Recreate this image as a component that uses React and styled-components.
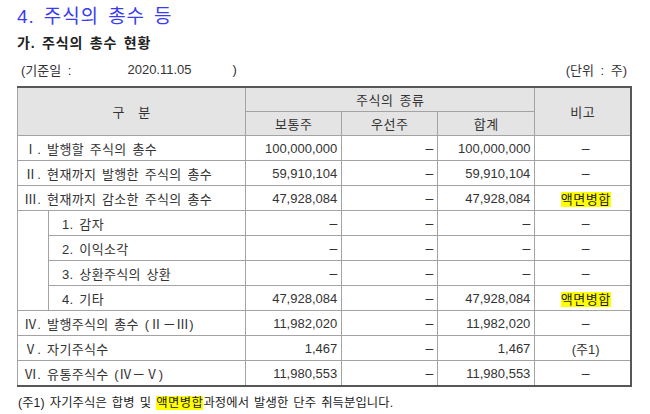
import React from 'react';
import styled, { createGlobalStyle } from 'styled-components';

const Global = createGlobalStyle`
  html, body { margin: 0; padding: 0; background: #ffffff; }
  body { font-family: "Liberation Sans", "Noto Sans CJK KR", sans-serif; color: #333; }
`;

const Page = styled.div`
  width: 650px;
  padding: 4px 18px 0 17px;
  box-sizing: border-box;
`;

const Title = styled.h1`
  margin: 0;
  font-size: 19px;
  line-height: 26px;
  font-weight: normal;
  color: #3b3bf2;
  letter-spacing: 0.9px;
  word-spacing: 3px;
`;

const SubTitle = styled.h2`
  margin: 2px 0 0 0;
  font-size: 14px;
  line-height: 22px;
  font-weight: bold;
  color: #222;
  letter-spacing: 0.8px;
  word-spacing: 2px;
`;

const InfoBar = styled.div`
  display: flex;
  justify-content: space-between;
  align-items: center;
  height: 28px;
  margin-top: 1px;
  padding: 0 5px 0 4px;
  font-size: 13px;
  color: #333;
  word-spacing: 3px;
`;

const DateGroup = styled.div`
  display: flex;
  align-items: center;
`;

const DateValue = styled.span`
  margin-left: ${p => p.$gap}px;
`;

const Table = styled.table`
  border-collapse: collapse;
  table-layout: fixed;
  width: 615px;
  margin-top: 3px;
  border: 2px solid #575757;
  border-left-width: 1px;
  font-size: 13px;
  color: #333;
`;

const Th = styled.th`
  background: #e4e4e4;
  border: 1px solid #a3a3a3;
  font-weight: normal;
  height: 23px;
  padding: 0;
  text-align: center;
  letter-spacing: 0.5px;
  word-spacing: ${p => (p.$wide ? '9px' : '2px')};
`;

const Td = styled.td`
  border: 1px solid #a3a3a3;
  height: 24px;
  padding: ${p => (p.$align === 'right' ? '0 4px 0 0' : p.$sub ? '0 0 0 13px' : '0 0 0 6px')};
  text-align: ${p => p.$align || 'left'};
  white-space: nowrap;
  letter-spacing: ${p => (p.$align === 'left' || !p.$align ? '0.3px' : '0')};
  word-spacing: 2px;
`;

const IndentCell = styled.td`
  border: 1px solid #a3a3a3;
  padding: 0;
`;

const Dash = styled.span`
  font-size: 14px;
`;

const Highlight = styled.span`
  background: #ffff00;
  color: #222;
  letter-spacing: 0.5px;
`;

const Footnote = styled.p`
  margin: 7px 0 0 1px;
  font-size: 12.3px;
  line-height: 18px;
  color: #222;
  letter-spacing: 0.1px;
  word-spacing: 1.5px;
`;

const D = () => <Dash>–</Dash>;

const Note = ({ v }) => {
  if (v === 'hl') return <Highlight>액면병합</Highlight>;
  if (v === '-') return <D />;
  return v;
};

const Num = ({ v }) => (v === '-' ? <D /> : v);

const mainRows = [
  { label: 'Ⅰ. 발행할 주식의 총수', c: '100,000,000', p: '-', t: '100,000,000', n: '-' },
  { label: 'Ⅱ. 현재까지 발행한 주식의 총수', c: '59,910,104', p: '-', t: '59,910,104', n: '-' },
  { label: 'Ⅲ. 현재까지 감소한 주식의 총수', c: '47,928,084', p: '-', t: '47,928,084', n: 'hl' },
];

const subRows = [
  { label: '1. 감자', c: '-', p: '-', t: '-', n: '-' },
  { label: '2. 이익소각', c: '-', p: '-', t: '-', n: '-' },
  { label: '3. 상환주식의 상환', c: '-', p: '-', t: '-', n: '-' },
  { label: '4. 기타', c: '47,928,084', p: '-', t: '47,928,084', n: 'hl' },
];

const tailRows = [
  { label: 'Ⅳ. 발행주식의 총수 (Ⅱ－Ⅲ)', c: '11,982,020', p: '-', t: '11,982,020', n: '-' },
  { label: 'Ⅴ. 자기주식수', c: '1,467', p: '-', t: '1,467', n: '(주1)' },
  { label: 'Ⅵ. 유통주식수 (Ⅳ－Ⅴ)', c: '11,980,553', p: '-', t: '11,980,553', n: '-' },
];

const Values = ({ r }) => (
  <>
    <Td $align="right"><Num v={r.c} /></Td>
    <Td $align="right"><Num v={r.p} /></Td>
    <Td $align="right"><Num v={r.t} /></Td>
    <Td $align="center"><Note v={r.n} /></Td>
  </>
);

export default function App() {
  return (
    <Page>
      <Global />
      <Title>4. 주식의 총수 등</Title>
      <SubTitle>가. 주식의 총수 현황</SubTitle>
      <InfoBar>
        <DateGroup>
          <span>(기준일 :</span>
          <DateValue $gap={56}>2020.11.05</DateValue>
          <DateValue $gap={41}>)</DateValue>
        </DateGroup>
        <span>(단위 : 주)</span>
      </InfoBar>
      <Table>
        <colgroup>
          <col style={{ width: 31 }} />
          <col style={{ width: 197 }} />
          <col style={{ width: 96 }} />
          <col style={{ width: 96 }} />
          <col style={{ width: 97 }} />
          <col style={{ width: 96 }} />
        </colgroup>
        <thead>
          <tr>
            <Th colSpan={2} rowSpan={2} $wide>구 분</Th>
            <Th colSpan={3}>주식의 종류</Th>
            <Th rowSpan={2}>비고</Th>
          </tr>
          <tr>
            <Th>보통주</Th>
            <Th>우선주</Th>
            <Th>합계</Th>
          </tr>
        </thead>
        <tbody>
          {mainRows.map(r => (
            <tr key={r.label}>
              <Td colSpan={2}>{r.label}</Td>
              <Values r={r} />
            </tr>
          ))}
          {subRows.map((r, i) => (
            <tr key={r.label}>
              {i === 0 && <IndentCell rowSpan={subRows.length} />}
              <Td $sub>{r.label}</Td>
              <Values r={r} />
            </tr>
          ))}
          {tailRows.map(r => (
            <tr key={r.label}>
              <Td colSpan={2}>{r.label}</Td>
              <Values r={r} />
            </tr>
          ))}
        </tbody>
      </Table>
      <Footnote>
        (주1) 자기주식은 합병 및 <Highlight>액면병합</Highlight>과정에서 발생한 단주 취득분입니다.
      </Footnote>
    </Page>
  );
}
